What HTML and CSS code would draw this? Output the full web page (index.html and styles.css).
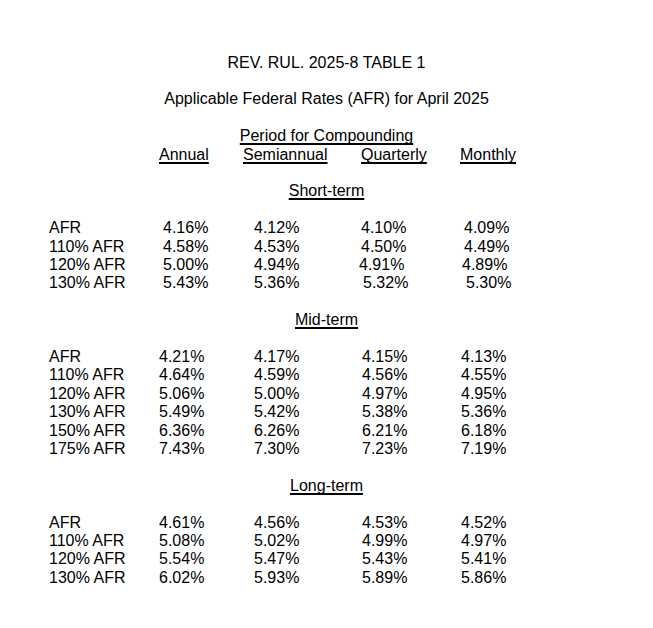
FILE: index.html
```html
<!DOCTYPE html>
<html>
<head>
<meta charset="utf-8">
<link rel="stylesheet" href="styles.css">
</head>
<body>
<div class="doc">
  <p class="center line">REV. RUL. 2025-8 TABLE 1</p>
  <p class="center line gap">Applicable Federal Rates (AFR) for April 2025</p>
  <p class="center line gap period"><u>Period for Compounding</u></p>
  <div class="row hdr">
    <span></span><u>Annual</u><u>Semiannual</u><u>Quarterly</u><u>Monthly</u>
  </div>

  <p class="center line gap"><u>Short-term</u></p>
  <div class="block short gap">
    <div class="row"><span>AFR</span><span>4.16%</span><span>4.12%</span><span>4.10%</span><span>4.09%</span></div>
    <div class="row"><span>110% AFR</span><span>4.58%</span><span>4.53%</span><span>4.50%</span><span>4.49%</span></div>
    <div class="row"><span>120% AFR</span><span>5.00%</span><span>4.94%</span><span class="nl">4.91%</span><span class="nl">4.89%</span></div>
    <div class="row"><span>130% AFR</span><span>5.43%</span><span>5.36%</span><span class="nr">5.32%</span><span class="nr">5.30%</span></div>
  </div>

  <p class="center line gap"><u>Mid-term</u></p>
  <div class="block gap">
    <div class="row"><span>AFR</span><span>4.21%</span><span>4.17%</span><span>4.15%</span><span>4.13%</span></div>
    <div class="row"><span>110% AFR</span><span>4.64%</span><span>4.59%</span><span>4.56%</span><span>4.55%</span></div>
    <div class="row"><span>120% AFR</span><span>5.06%</span><span>5.00%</span><span>4.97%</span><span>4.95%</span></div>
    <div class="row"><span>130% AFR</span><span>5.49%</span><span>5.42%</span><span>5.38%</span><span>5.36%</span></div>
    <div class="row"><span>150% AFR</span><span>6.36%</span><span>6.26%</span><span>6.21%</span><span>6.18%</span></div>
    <div class="row"><span>175% AFR</span><span>7.43%</span><span>7.30%</span><span>7.23%</span><span>7.19%</span></div>
  </div>

  <p class="center line gap"><u>Long-term</u></p>
  <div class="block gap">
    <div class="row"><span>AFR</span><span>4.61%</span><span>4.56%</span><span>4.53%</span><span>4.52%</span></div>
    <div class="row"><span>110% AFR</span><span>5.08%</span><span>5.02%</span><span>4.99%</span><span>4.97%</span></div>
    <div class="row"><span>120% AFR</span><span>5.54%</span><span>5.47%</span><span>5.43%</span><span>5.41%</span></div>
    <div class="row"><span>130% AFR</span><span>6.02%</span><span>5.93%</span><span>5.89%</span><span>5.86%</span></div>
  </div>
</div>
</body>
</html>
```

FILE: styles.css
```css
html, body {
  margin: 0;
  padding: 0;
  background: #ffffff;
}

.doc {
  width: 653px;
  padding-top: 53.5px;
  font-family: "Liberation Sans", Arial, sans-serif;
  font-size: 16px;
  line-height: 18.4px;
  color: #000000;
}

p {
  margin: 0;
}

u {
  text-decoration: underline;
  text-decoration-thickness: 1.5px;
  text-underline-offset: 1.5px;
  text-decoration-skip-ink: none;
}

.center {
  text-align: center;
}

.gap {
  margin-top: 18.4px;
}

.row {
  display: grid;
  grid-template-columns: 110px 95px 108px 99px 1fr;
  padding-left: 49px;
  white-space: nowrap;
}

.short .row {
  grid-template-columns: 114px 91px 107px 103px 1fr;
}

.hdr {
  grid-template-columns: 110px 84px 118px 99px 1fr;
}

.nl {
  margin-left: -2px;
}

.nr {
  margin-left: 2px;
}
```
